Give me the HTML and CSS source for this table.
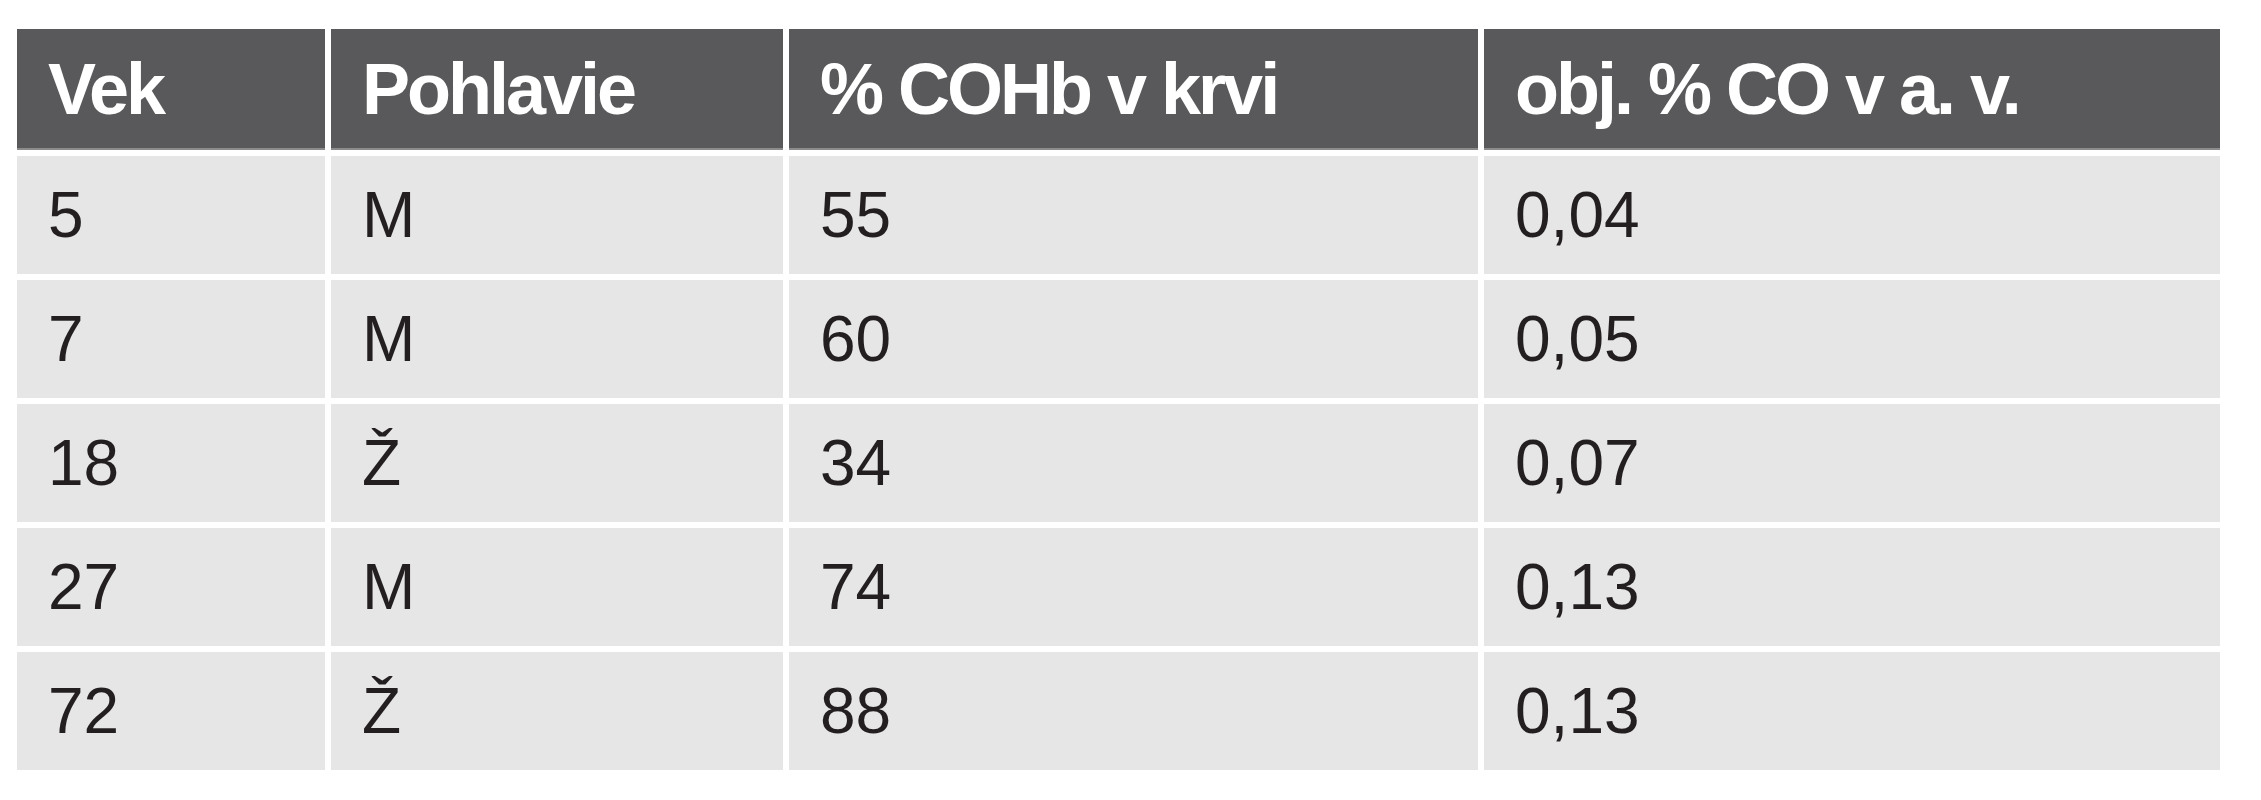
FILE: index.html
```html
<!DOCTYPE html>
<html lang="sk">
<head>
<meta charset="utf-8">
<title>Tabuľka</title>
<link rel="stylesheet" href="styles.css">
</head>
<body>
<table class="data">
  <colgroup>
    <col class="c1">
    <col class="c2">
    <col class="c3">
    <col class="c4">
  </colgroup>
  <thead>
    <tr class="head">
      <th>Vek</th>
      <th>Pohlavie</th>
      <th>% COHb v krvi</th>
      <th>obj. % CO v a. v.</th>
    </tr>
  </thead>
  <tbody>
    <tr class="row"><td>5</td><td>M</td><td>55</td><td>0,04</td></tr>
    <tr class="row"><td>7</td><td>M</td><td>60</td><td>0,05</td></tr>
    <tr class="row"><td>18</td><td>Ž</td><td>34</td><td>0,07</td></tr>
    <tr class="row"><td>27</td><td>M</td><td>74</td><td>0,13</td></tr>
    <tr class="row"><td>72</td><td>Ž</td><td>88</td><td>0,13</td></tr>
  </tbody>
</table>
</body>
</html>
```
FILE: styles.css
```css
html, body {
  margin: 0;
  padding: 0;
  background: #ffffff;
}

body {
  padding: 23px 0 0 11px;
  font-family: "Liberation Sans", Arial, sans-serif;
}

.data {
  border-collapse: separate;
  border-spacing: 6px;
  table-layout: fixed;
  width: 2215px;
}

.c1 { width: 308px; }
.c2 { width: 452px; }
.c3 { width: 689px; }
.c4 { width: 736px; }

.data th,
.data td {
  padding: 0 0 0 31px;
  text-align: left;
  vertical-align: middle;
  white-space: nowrap;
  box-sizing: border-box;
}

.head th {
  height: 121px;
  background: #59585a;
  border-bottom: 2px solid #8c8c8c;
  color: #ffffff;
  font-weight: bold;
  font-size: 72px;
  letter-spacing: -3px;
}

.row td {
  height: 118px;
  background: #e6e6e6;
  color: #231f20;
  font-weight: normal;
  font-size: 64px;
}
```
